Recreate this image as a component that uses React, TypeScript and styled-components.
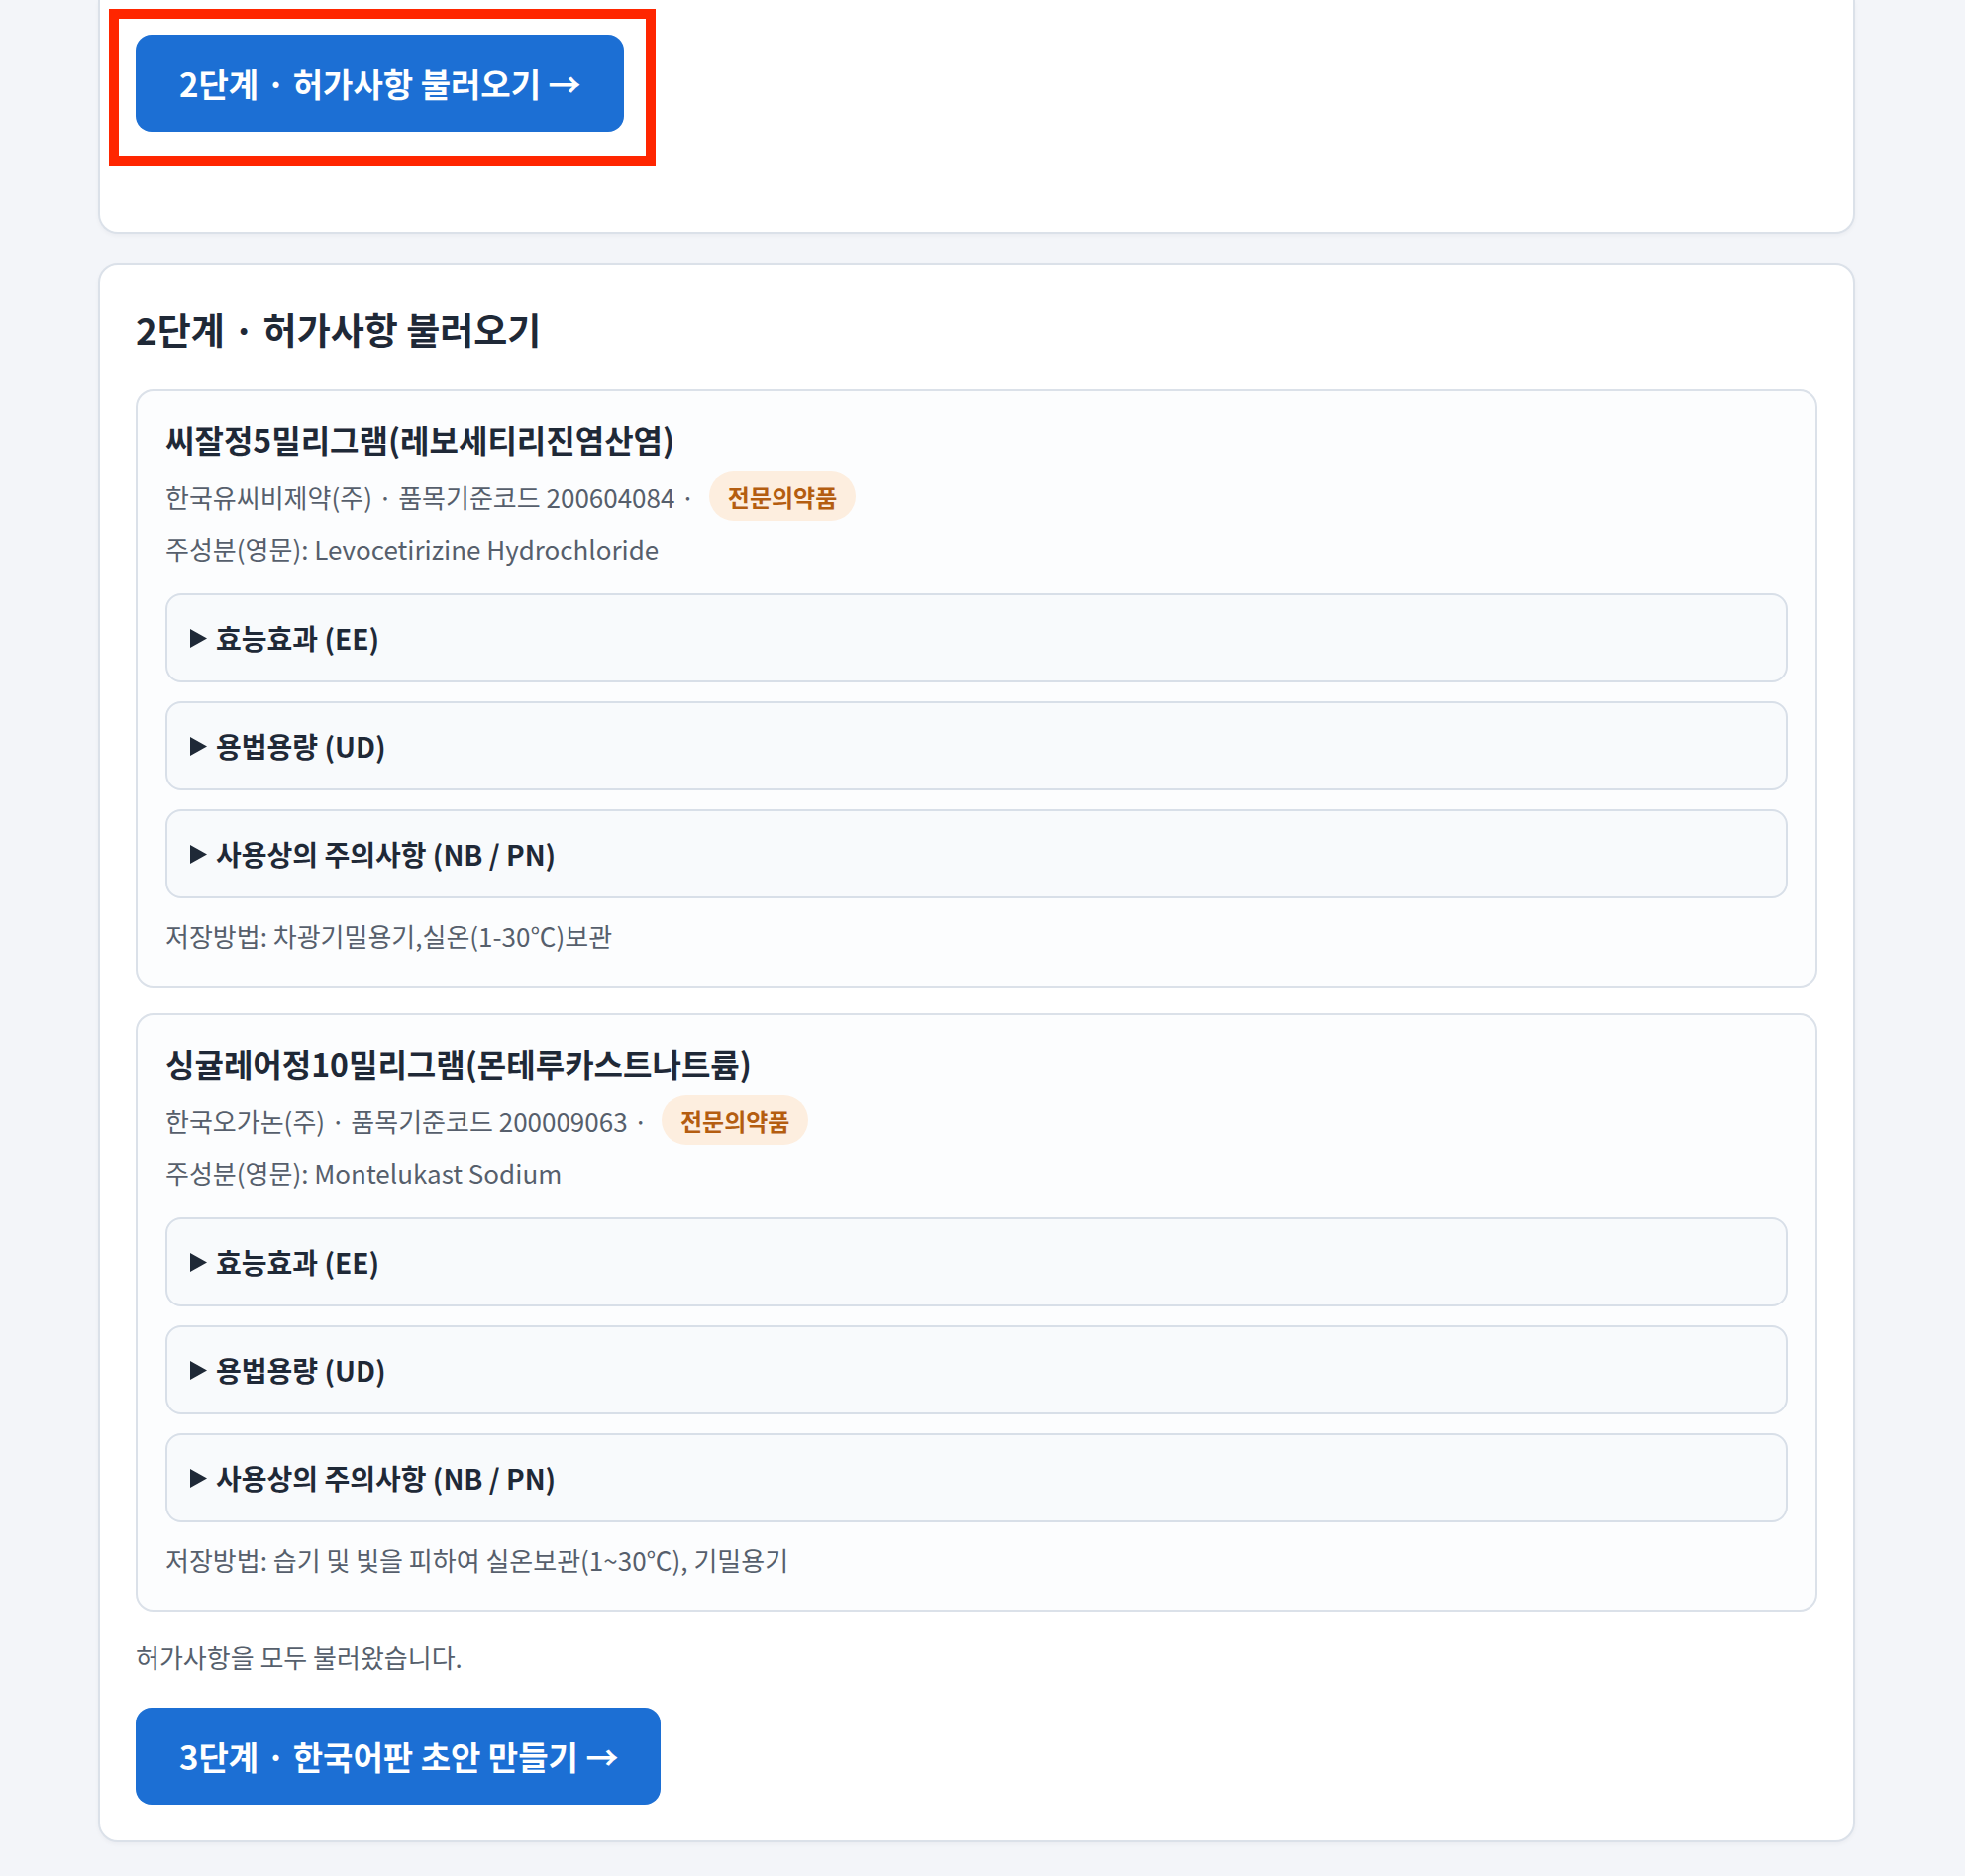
import React from "react";
import styled, { createGlobalStyle } from "styled-components";

const FONT = `"Noto Sans CJK KR", "Noto Sans", "Liberation Sans", sans-serif`;

const GlobalStyle = createGlobalStyle`
  html, body {
    margin: 0;
    padding: 0;
    background: #f3f5f9;
    font-family: ${FONT};
    color: #1f2937;
  }
`;

interface Drug {
  name: string;
  maker: string;
  code: string;
  ingredient: string;
  storage: string;
}

const DRUGS: Drug[] = [
  {
    name: "씨잘정5밀리그램(레보세티리진염산염)",
    maker: "한국유씨비제약(주)",
    code: "200604084",
    ingredient: "Levocetirizine Hydrochloride",
    storage: "차광기밀용기,실온(1-30℃)보관",
  },
  {
    name: "싱귤레어정10밀리그램(몬테루카스트나트륨)",
    maker: "한국오가논(주)",
    code: "200009063",
    ingredient: "Montelukast Sodium",
    storage: "습기 및 빛을 피하여 실온보관(1~30℃), 기밀용기",
  },
];

const SECTIONS = ["효능효과 (EE)", "용법용량 (UD)", "사용상의 주의사항 (NB / PN)"];

const Page = styled.div`
  padding: 0 111px 36px 99px;
  display: flex;
  flex-direction: column;
  gap: 30px;
`;

const Card = styled.section<{ $cropped?: boolean }>`
  background: #fff;
  border: 2px solid #dbe1e9;
  border-radius: 20px;
  box-shadow: 0 2px 4px rgba(15, 23, 42, 0.04);
  padding: 36px;
  display: flex;
  flex-direction: column;
  align-items: flex-start;

  ${({ $cropped }) =>
    $cropped &&
    `
    border-top: none;
    border-top-left-radius: 0;
    border-top-right-radius: 0;
    padding-top: 35px;
    padding-bottom: 101px;
  `}
`;

const CardTitle = styled.h2`
  margin: 0 0 33px;
  font-size: 37px;
  line-height: 56px;
  font-weight: 700;
  color: #1f2937;
`;

const ButtonWrap = styled.div`
  position: relative;
  display: inline-block;
`;

const Highlight = styled.div`
  position: absolute;
  top: -26px;
  left: -27px;
  right: -32px;
  bottom: -35px;
  border: 10px solid #ff2600;
  pointer-events: none;
`;

const PrimaryButton = styled.button`
  font-family: ${FONT};
  font-size: 33px;
  line-height: 48px;
  font-weight: 700;
  color: #fff;
  background: #1c6fd4;
  border: none;
  border-radius: 16px;
  padding: 25px 43px 25px 44px;
  cursor: pointer;
  white-space: nowrap;
`;

const DrugList = styled.div`
  align-self: stretch;
  display: flex;
  flex-direction: column;
  gap: 26px;
`;

const DrugCard = styled.article`
  background: #fcfdfe;
  border: 2px solid #dbe1e9;
  border-radius: 18px;
  padding: 26px 28px 30px;
  display: flex;
  flex-direction: column;
`;

const DrugName = styled.h3`
  margin: 0 0 11px;
  font-size: 32px;
  line-height: 44px;
  font-weight: 700;
  color: #1f2937;
`;

const MetaRow = styled.div`
  display: flex;
  align-items: center;
  gap: 14px;
  height: 50px;
  font-size: 26px;
  color: #565f6c;
`;

const Badge = styled.span`
  display: inline-flex;
  align-items: center;
  height: 50px;
  padding: 0 19px;
  border-radius: 25px;
  background: #fdeedf;
  color: #b45d10;
  font-size: 24px;
  font-weight: 700;
`;

const InfoLine = styled.p`
  margin: 0;
  font-size: 26px;
  line-height: 40px;
  color: #565f6c;
`;

const Ingredient = styled(InfoLine)`
  margin: 8px 0 25px;
`;

const Accordions = styled.div`
  display: flex;
  flex-direction: column;
  gap: 19px;
  margin-bottom: 18px;
`;

const Accordion = styled.div`
  background: #f8fafc;
  border: 2px solid #d8dfe8;
  border-radius: 16px;
  padding: 0 23px;
  height: 90px;
  box-sizing: border-box;
  display: flex;
  align-items: center;
  gap: 9px;
  font-size: 28px;
  font-weight: 700;
  color: #1f2937;
  cursor: pointer;
`;

const Caret = styled.svg`
  width: 17px;
  height: 19px;
  flex: none;
  fill: #1f2937;
`;

const Status = styled.p`
  margin: 26px 0 31px;
  font-size: 26px;
  line-height: 40px;
  color: #565f6c;
`;

const DrugItem = ({ drug }: { drug: Drug }) => (
  <DrugCard>
    <DrugName>{drug.name}</DrugName>
    <MetaRow>
      <span>
        {drug.maker} · 품목기준코드 {drug.code} ·
      </span>
      <Badge>전문의약품</Badge>
    </MetaRow>
    <Ingredient>주성분(영문): {drug.ingredient}</Ingredient>
    <Accordions>
      {SECTIONS.map((s) => (
        <Accordion key={s}>
          <Caret viewBox="0 0 17 19">
            <polygon points="0,0 17,9.5 0,19" />
          </Caret>
          {s}
        </Accordion>
      ))}
    </Accordions>
    <InfoLine>저장방법: {drug.storage}</InfoLine>
  </DrugCard>
);

export default function App() {
  return (
    <>
      <GlobalStyle />
      <Page>
        <Card $cropped>
          <ButtonWrap>
            <PrimaryButton>2단계 · 허가사항 불러오기 →</PrimaryButton>
            <Highlight />
          </ButtonWrap>
        </Card>
        <Card>
          <CardTitle>2단계 · 허가사항 불러오기</CardTitle>
          <DrugList>
            {DRUGS.map((d) => (
              <DrugItem key={d.code} drug={d} />
            ))}
          </DrugList>
          <Status>허가사항을 모두 불러왔습니다.</Status>
          <PrimaryButton>3단계 · 한국어판 초안 만들기 →</PrimaryButton>
        </Card>
      </Page>
    </>
  );
}
